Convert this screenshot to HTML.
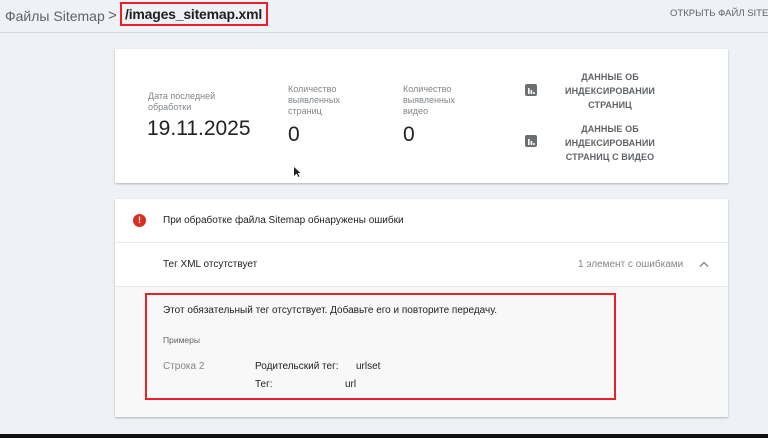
<!DOCTYPE html>
<html><head><meta charset="utf-8"><style>
*{margin:0;padding:0;box-sizing:border-box}
body{width:768px;height:438px;overflow:hidden;background:#eef1f5;font-family:"Liberation Sans","Noto Sans CJK SC",sans-serif;position:relative;color:#202124}
.a{position:absolute;white-space:nowrap}
.card{position:absolute;background:#fff;box-shadow:0 1px 2px rgba(0,0,0,.25)}
.lbl{font-size:9px;color:#80868b;line-height:12px;white-space:normal}
.link{font-size:9px;color:#5f6368;line-height:14px;text-align:center;font-weight:bold;letter-spacing:.1px}
</style></head><body>
<div class="a" style="left:5px;top:8px;font-size:14px;color:#5f6368">Файлы Sitemap</div>
<div class="a" style="left:108px;top:7px;font-size:15px;color:#5f6368">&gt;</div>
<div class="a" style="left:120px;top:2px;width:148px;height:24px;border:2px solid #e8202a"></div>
<div class="a" style="left:125px;top:6px;font-size:14px;color:#202124;font-weight:bold;letter-spacing:-.2px">/images_sitemap.xml</div>
<div class="a" style="left:670px;top:8px;font-size:9.5px;color:#5f6368">ОТКРЫТЬ ФАЙЛ SITEMAP</div>
<div class="a" style="left:0;top:32px;width:768px;height:1px;background:#d6d8db"></div>

<div class="card" style="left:115px;top:49px;width:613px;height:134px"></div>
<div class="a lbl" style="left:148px;top:91px;width:80px;line-height:11px">Дата последней обработки</div>
<div class="a" style="left:147px;top:117px;font-size:21px;color:#202124">19.11.2025</div>
<div class="a lbl" style="left:288px;top:84px;width:70px;line-height:11px">Количество выявленных страниц</div>
<div class="a" style="left:288px;top:123px;font-size:21px">0</div>
<div class="a lbl" style="left:403px;top:84px;width:70px;line-height:11px">Количество выявленных видео</div>
<div class="a" style="left:403px;top:123px;font-size:21px">0</div>
<svg class="a" style="left:525px;top:84px" width="12" height="12"><rect width="12" height="12" rx="2" fill="#6b6f73"/><rect x="3" y="4" width="1.6" height="6" fill="#fff"/><rect x="5.6" y="6" width="1.6" height="4" fill="#fff"/><rect x="8.2" y="8" width="1.6" height="2" fill="#fff"/></svg>
<div class="a link" style="left:560px;top:70px;width:100px;white-space:normal">ДАННЫЕ ОБ ИНДЕКСИРОВАНИИ СТРАНИЦ</div>
<svg class="a" style="left:525px;top:135px" width="12" height="12"><rect width="12" height="12" rx="2" fill="#6b6f73"/><rect x="3" y="4" width="1.6" height="6" fill="#fff"/><rect x="5.6" y="6" width="1.6" height="4" fill="#fff"/><rect x="8.2" y="8" width="1.6" height="2" fill="#fff"/></svg>
<div class="a link" style="left:560px;top:122px;width:100px;white-space:normal">ДАННЫЕ ОБ ИНДЕКСИРОВАНИИ СТРАНИЦ С ВИДЕО</div>
<svg class="a" style="left:293px;top:166px" width="8" height="12"><path d="M1 1 L1 10 L3.5 7.5 L5.5 11 L6.5 10.5 L4.8 7 L7.5 7 Z" fill="#222"/></svg>

<div class="card" style="left:115px;top:199px;width:613px;height:218px;background:#f8f8f8"></div>
<div class="a" style="left:115px;top:199px;width:613px;height:87px;background:#fff"></div>
<div class="a" style="left:115px;top:242px;width:613px;height:1px;background:#e8eaed"></div>
<div class="a" style="left:115px;top:286px;width:613px;height:1px;background:#e8eaed"></div>
<div class="a" style="left:133px;top:214px;width:13px;height:13px;border-radius:50%;background:#d93025;color:#fff;font-size:9px;font-weight:bold;text-align:center;line-height:13px">!</div>
<div class="a" style="left:163px;top:215px;font-size:10px">При обработке файла Sitemap обнаружены ошибки</div>
<div class="a" style="left:163px;top:259px;font-size:10px">Тег XML отсутствует</div>
<div class="a" style="left:578px;top:259px;font-size:10px;color:#80868b">1 элемент с ошибками</div>
<svg class="a" style="left:699px;top:261px" width="10" height="7"><path d="M1 5.5 L5 1.5 L9 5.5" stroke="#80868b" stroke-width="1.3" fill="none"/></svg>
<div class="a" style="left:145px;top:293px;width:471px;height:107px;border:2px solid #e8202a"></div>
<div class="a" style="left:163px;top:305px;font-size:10px">Этот обязательный тег отсутствует. Добавьте его и повторите передачу.</div>
<div class="a" style="left:163px;top:335px;font-size:8.5px;color:#5f6368">Примеры</div>
<div class="a" style="left:163px;top:361px;font-size:10px;color:#80868b">Строка 2</div>
<div class="a" style="left:255px;top:361px;font-size:10px">Родительский тег:</div>
<div class="a" style="left:356px;top:361px;font-size:10px">urlset</div>
<div class="a" style="left:255px;top:379px;font-size:10px">Тег:</div>
<div class="a" style="left:345px;top:379px;font-size:10px">url</div>
<div class="a" style="left:0;top:434px;width:768px;height:4px;background:#111"></div>
</body></html>
